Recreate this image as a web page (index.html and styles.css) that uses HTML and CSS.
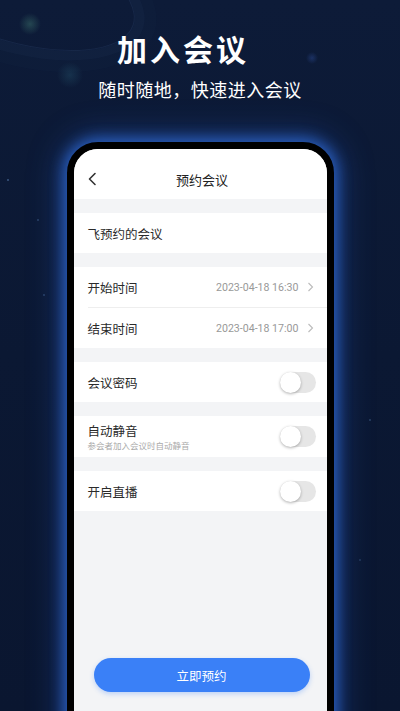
FILE: index.html
```html
<!DOCTYPE html>
<html lang="zh-CN">
<head>
    <meta charset="UTF-8">
    <meta name="viewport" content="width=device-width, initial-scale=1.0">
    <title>加入会议</title>
    <link rel="stylesheet" href="styles.css">
</head>
<body>
    <div class="page">
        <div class="orbit"></div>
        <div class="hero">
            <h1 class="title">加入会议</h1>
            <p class="subtitle">随时随地，快速进入会议</p>
        </div>

        <div class="phone">
            <div class="screen">
                <div class="nav">
                    <svg class="back" width="12" height="14" viewBox="0 0 12 14">
                        <path d="M8 1.5 L2.5 7 L8 12.5" fill="none" stroke="#333" stroke-width="1.6" stroke-linecap="round" stroke-linejoin="round"/>
                    </svg>
                    <span class="nav-title">预约会议</span>
                </div>

                <div class="group">
                    <div class="row">
                        <span class="label">飞预约的会议</span>
                    </div>
                </div>

                <div class="group">
                    <div class="row">
                        <span class="label">开始时间</span>
                        <span class="value">2023-04-18 16:30
                            <svg class="arrow" width="7" height="10" viewBox="0 0 7 10"><path d="M1.5 1 L5.5 5 L1.5 9" fill="none" stroke="#bbb" stroke-width="1.1"/></svg>
                        </span>
                    </div>
                    <div class="row">
                        <span class="label">结束时间</span>
                        <span class="value">2023-04-18 17:00
                            <svg class="arrow" width="7" height="10" viewBox="0 0 7 10"><path d="M1.5 1 L5.5 5 L1.5 9" fill="none" stroke="#bbb" stroke-width="1.1"/></svg>
                        </span>
                    </div>
                </div>

                <div class="group">
                    <div class="row">
                        <span class="label">会议密码</span>
                        <span class="switch"><span class="knob"></span></span>
                    </div>
                </div>

                <div class="group">
                    <div class="row tall">
                        <div class="label-wrap">
                            <span class="label">自动静音</span>
                            <span class="hint">参会者加入会议时自动静音</span>
                        </div>
                        <span class="switch"><span class="knob"></span></span>
                    </div>
                </div>

                <div class="group">
                    <div class="row">
                        <span class="label">开启直播</span>
                        <span class="switch"><span class="knob"></span></span>
                    </div>
                </div>

                <div class="spacer"></div>
                <button class="submit">立即预约</button>
            </div>
        </div>
    </div>
</body>
</html>
```

FILE: styles.css
```css
* {
    margin: 0;
    padding: 0;
    box-sizing: border-box;
}

body {
    font-family: "Noto Sans CJK SC", "Noto Sans", sans-serif;
    background: #0b1731;
    overflow: hidden;
}

.page {
    position: relative;
    width: 400px;
    height: 711px;
    overflow: hidden;
    background:
        radial-gradient(circle at 30px 24px, rgba(90, 170, 140, 0.3) 0, rgba(90, 170, 140, 0) 11px),
        radial-gradient(circle at 70px 75px, rgba(60, 140, 160, 0.2) 0, rgba(60, 140, 160, 0) 13px),
        radial-gradient(circle at 312px 58px, rgba(60, 100, 200, 0.3) 0, rgba(60, 100, 200, 0) 6px),
        radial-gradient(circle at 8px 180px, rgba(120, 170, 230, 0.6) 0, rgba(120, 170, 230, 0) 1.5px),
        radial-gradient(circle at 38px 220px, rgba(120, 170, 230, 0.5) 0, rgba(120, 170, 230, 0) 1.2px),
        radial-gradient(circle at 44px 295px, rgba(120, 170, 230, 0.5) 0, rgba(120, 170, 230, 0) 1.2px),
        radial-gradient(circle at 370px 420px, rgba(120, 170, 230, 0.5) 0, rgba(120, 170, 230, 0) 1.2px),
        radial-gradient(circle at 360px 560px, rgba(120, 170, 230, 0.4) 0, rgba(120, 170, 230, 0) 1.2px),
        linear-gradient(180deg, #0d1b38 0%, #0b1833 50%, #0a1630 100%);
}

.orbit {
    position: absolute;
    left: -120px;
    top: -70px;
    width: 260px;
    height: 110px;
    border: 1px solid rgba(120, 160, 220, 0.1);
    border-radius: 50%;
    transform: rotate(18deg);
    box-shadow: 0 0 0 10px rgba(120, 160, 220, 0.03), 0 0 0 22px rgba(120, 160, 220, 0.02);
}

.hero {
    position: relative;
    text-align: center;
    color: #fff;
    padding-top: 30px;
}

.title {
    font-size: 30px;
    line-height: 36px;
    font-weight: 700;
    letter-spacing: 3px;
    padding-right: 34px;
}

.subtitle {
    margin-top: 11px;
    font-size: 18px;
    line-height: 24px;
    letter-spacing: 0.5px;
}

.phone {
    position: relative;
    width: 267px;
    height: 620px;
    margin: 41px auto 0;
    border: 7px solid #000;
    border-radius: 31px;
    background: #000;
    box-shadow: 0 0 14px 4px rgba(48, 110, 220, 0.75), 0 0 30px 10px rgba(40, 90, 190, 0.35);
}

.screen {
    height: 100%;
    background: #f3f4f6;
    border-radius: 24px;
    overflow: hidden;
    display: flex;
    flex-direction: column;
}

.nav {
    position: relative;
    height: 50px;
    padding-top: 10px;
    background: #fff;
    display: flex;
    align-items: center;
    justify-content: center;
}

.back {
    position: absolute;
    left: 13px;
    top: 23px;
}

.nav-title {
    font-size: 13px;
    color: #222;
    padding-left: 4px;
}

.group {
    margin-top: 14px;
    background: #fff;
}

.row {
    height: 40px;
    margin: 0 0 0 14px;
    padding-right: 11px;
    display: flex;
    align-items: center;
    justify-content: space-between;
}

.row + .row {
    border-top: 1px solid #eeeeee;
    height: 41px;
}

.row.tall {
    height: 41px;
}

.label {
    font-size: 12.5px;
    color: #2a2a2a;
}

.label-wrap {
    display: flex;
    flex-direction: column;
    padding-top: 1px;
}

.label-wrap .label {
    line-height: 16px;
}

.hint {
    font-size: 8.5px;
    color: #aaa;
    line-height: 12px;
}

.value {
    display: flex;
    align-items: center;
    font-family: "Roboto", "Noto Sans", sans-serif;
    font-size: 10.6px;
    color: #999;
    gap: 8px;
    padding-right: 2px;
}

.switch {
    position: relative;
    width: 36px;
    height: 21px;
    border-radius: 11px;
    background: #e6e6e6;
}

.knob {
    position: absolute;
    left: 0;
    top: 0;
    width: 21px;
    height: 21px;
    border-radius: 50%;
    background: #fff;
    box-shadow: 0 1px 3px rgba(0, 0, 0, 0.3);
}

.spacer {
    flex: 0 0 147px;
}

.submit {
    margin: 0 17px 0 20px;
    height: 34px;
    border: none;
    border-radius: 17px;
    background: #3a80f7;
    color: #fff;
    font-family: "Noto Sans CJK SC", sans-serif;
    font-size: 12.5px;
    box-shadow: 0 2px 5px rgba(58, 128, 247, 0.3);
}
```
